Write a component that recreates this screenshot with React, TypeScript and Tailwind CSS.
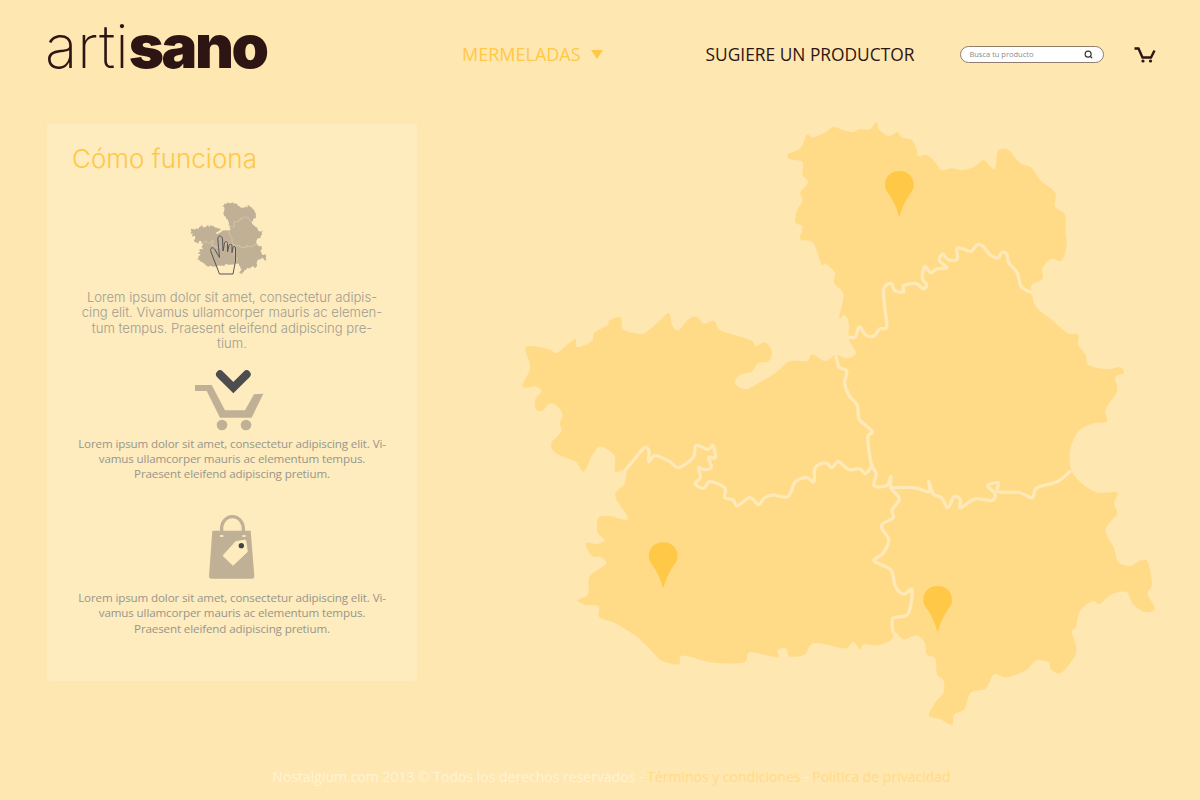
import { Search } from 'lucide-react';

// Map traced in a 1568x1568 space, squeezed to 660x630 on the page
const outline = [[660,110],[690,95],[705,62],[720,68],[745,58],[768,42],[790,50],[815,55],[830,48],[855,48],[870,30],[878,50],[900,65],[920,55],[930,68],[955,75],[965,95],[970,115],[990,112],[1010,130],[1025,150],[1050,145],[1075,150],[1105,140],[1125,125],[1150,148],[1155,130],[1160,100],[1185,100],[1210,130],[1240,145],[1260,175],[1295,205],[1295,240],[1318,260],[1320,300],[1322,340],[1310,375],[1285,370],[1265,395],[1265,420],[1240,435],[1240,455],[1250,490],[1285,520],[1325,555],[1350,558],[1350,585],[1368,610],[1375,635],[1420,645],[1450,640],[1458,655],[1438,665],[1442,700],[1415,745],[1418,775],[1385,780],[1350,800],[1330,850],[1335,900],[1360,930],[1395,952],[1442,952],[1435,980],[1442,1005],[1415,1045],[1435,1090],[1445,1125],[1475,1135],[1495,1122],[1515,1125],[1525,1180],[1515,1205],[1532,1240],[1510,1250],[1480,1230],[1465,1200],[1430,1205],[1400,1230],[1385,1222],[1355,1245],[1345,1285],[1335,1300],[1345,1350],[1310,1400],[1285,1392],[1280,1375],[1250,1370],[1225,1395],[1180,1412],[1150,1405],[1130,1440],[1095,1450],[1080,1490],[1055,1505],[1050,1530],[1020,1515],[995,1508],[1010,1475],[1030,1450],[1030,1420],[1015,1405],[1010,1365],[990,1355],[985,1325],[965,1308],[935,1318],[915,1300],[905,1320],[875,1332],[840,1330],[832,1342],[815,1325],[795,1340],[740,1328],[715,1330],[700,1355],[665,1360],[655,1340],[635,1345],[635,1362],[570,1350],[555,1375],[480,1375],[410,1358],[400,1380],[360,1370],[340,1350],[300,1310],[270,1290],[245,1275],[212,1262],[210,1235],[180,1232],[160,1220],[185,1205],[190,1160],[228,1130],[215,1112],[195,1110],[180,1078],[205,1080],[225,1070],[208,1050],[210,1015],[235,1010],[280,1018],[250,960],[272,930],[275,895],[250,900],[248,860],[215,838],[195,860],[175,900],[155,875],[110,855],[98,830],[122,800],[118,780],[125,760],[115,740],[95,730],[78,748],[62,745],[60,720],[75,700],[60,688],[30,688],[48,640],[38,590],[90,595],[110,605],[135,585],[155,570],[160,590],[195,575],[200,555],[232,535],[235,525],[262,515],[268,545],[295,555],[320,555],[360,520],[378,505],[385,535],[400,548],[425,520],[445,515],[460,532],[485,525],[500,548],[550,565],[575,575],[585,588],[605,578],[622,600],[615,625],[590,630],[575,650],[545,660],[535,680],[560,695],[590,680],[630,655],[665,625],[705,625],[718,608],[748,625],[775,610],[800,618],[822,605],[805,570],[805,530],[795,510],[782,518],[792,460],[770,430],[772,405],[750,382],[740,385],[720,330],[690,322],[695,290],[678,280],[682,250],[695,225],[690,205],[708,180],[695,160],[695,130],[665,122]];

const borders = [
  [[1240,455],[1215,440],[1205,405],[1185,380],[1180,358],[1168,355],[1160,368],[1140,360],[1125,340],[1110,335],[1095,352],[1075,345],[1062,345],[1062,372],[1040,372],[1028,358],[1020,375],[1038,392],[1015,395],[1000,405],[985,390],[980,420],[990,435],[982,445],[965,432],[935,437],[935,452],[915,450],[905,432],[888,445],[890,490],[895,540],[878,545],[865,562],[845,560],[830,540],[820,565],[805,565]],
  [[775,615],[782,640],[800,650],[795,680],[805,710],[825,735],[830,770],[860,800],[850,815],[858,880],[870,905],[865,935],[895,935],[905,912],[905,940],[925,968],[908,995],[910,1015],[885,1030],[885,1045],[900,1070],[885,1105],[865,1122],[905,1145],[915,1185],[935,1205],[955,1195],[945,1255],[910,1265],[910,1300]],
  [[275,895],[295,870],[320,840],[330,850],[330,875],[345,860],[380,875],[400,890],[435,865],[442,835],[470,845],[482,835],[488,865],[472,865],[478,890],[460,895],[448,890],[452,915],[440,930],[460,942],[475,925],[510,940],[510,965],[530,970],[540,985],[570,965],[590,982],[605,965],[625,958],[660,962],[678,925],[705,915],[722,925],[725,890],[750,878],[765,890],[780,875],[805,895],[830,893],[845,905],[860,885]],
  [[905,940],[960,940],[995,950],[995,925],[1005,955],[1025,965],[1040,990],[1055,962],[1070,970],[1070,990],[1105,968],[1145,972],[1152,955],[1135,935],[1160,928],[1160,950],[1210,952],[1240,965],[1252,940],[1300,925],[1330,900]],
];

const pins = [[925,152],[364,1076],[1016,1185]];

// runs a curve through every traced point (catmull-rom as cubic beziers)
const smooth = (pts: number[][], closed = false) => {
  const n = pts.length;
  const at = (i: number) => (closed ? pts[(i + n) % n] : pts[Math.max(0, Math.min(n - 1, i))]);
  let d = `M${pts[0][0]} ${pts[0][1]}`;
  for (let i = 0; i < (closed ? n : n - 1); i++) {
    const [p0, p1, p2, p3] = [at(i - 1), at(i), at(i + 1), at(i + 2)];
    const c1 = [p1[0] + (p2[0] - p0[0]) / 6, p1[1] + (p2[1] - p0[1]) / 6];
    const c2 = [p2[0] - (p3[0] - p1[0]) / 6, p2[1] - (p3[1] - p1[1]) / 6];
    d += ` C${c1[0]} ${c1[1]} ${c2[0]} ${c2[1]} ${p2[0]} ${p2[1]}`;
  }
  return closed ? d + 'Z' : d;
};

const outlinePath = smooth(outline, true);
const borderPaths = borders.map((b) => smooth(b));

const CartIcon = () => (
  <svg width="22" height="16" viewBox="0 0 22 16" fill="none">
    <path d="M0.5 1.5H4.5L8.5 10.5H17L20.5 3.5" stroke="#2d1514" strokeWidth="2.4" />
    <circle cx="9" cy="14" r="1.6" fill="#2d1514" />
    <circle cx="16.5" cy="14" r="1.6" fill="#2d1514" />
  </svg>
);

const HandMapIcon = () => (
  <svg width="120" height="95" viewBox="2.5 0 120 95" className="block">
    <g transform="translate(19.5 11.6) scale(0.0506 0.048)">
      <path d={outlinePath} fill="#c0b196" />
      {borderPaths.map((d, i) => (
        <path key={i} d={d} fill="none" stroke="#d9cba9" strokeWidth="0.7" vectorEffect="non-scaling-stroke" />
      ))}
    </g>
    <path
      d="M50 85L41.5 63C40 59 43 57.5 45 60L50 68.5L48.3 50C48.3 46 52.5 46 53 50L53.5 62L55 54C55.5 52 58 52 58 54.5V63L59.5 56.5C60 54.5 62.5 54.5 62.5 57V63.5L63.5 58.5C64 57 66 57 66 59V72L63.5 85Z"
      fill="none"
      stroke="#55555a"
      strokeWidth="1"
      strokeLinejoin="round"
    />
  </svg>
);

const BasketIcon = () => (
  <svg width="100" height="70" viewBox="6 0 300 210" className="block">
    <path d="M45 60H95L135 136H195L222 88L250 86L215 158H120L80 78H45Z" fill="#c0b196" />
    <circle cx="126" cy="180" r="16" fill="#c0b196" />
    <circle cx="198" cy="180" r="16" fill="#c0b196" />
    <path d="M120 28L160 68L200 28" fill="none" stroke="#4d4d4f" strokeWidth="24" strokeLinecap="round" />
  </svg>
);

const BagIcon = () => (
  <svg width="80" height="75" viewBox="4 0 240 225" className="block">
    <path d="M93 64C88 5 162 5 158 64" fill="none" stroke="#c0b196" strokeWidth="10" />
    <path d="M65 62H180L191 198Q191 206 184 206H62Q55 206 55 198Z" fill="#c0b196" />
    <ellipse cx="93" cy="78" rx="6" ry="3" fill="#feebbe" />
    <ellipse cx="160" cy="78" rx="6" ry="3" fill="#feebbe" />
    <path d="M97 137L135 95L165 90L170 125L127 166Z" fill="#feebbe" stroke="#feebbe" strokeWidth="3" strokeLinejoin="round" />
    <circle cx="152" cy="107" r="8" fill="#444448" />
  </svg>
);

const bodyText = 'text-center font-["Open_Sans",sans-serif] text-[11.6px] leading-[15.4px] tracking-[-0.13px] text-[#98968c]';

export default function App() {
  return (
    <div className="h-[800px] w-[1200px] overflow-hidden bg-[#ffe7b1] flex flex-col">
      {/* Header */}
      <header className="h-[110px] shrink-0 flex items-start">
        <div className='ml-[45px] mt-[9px] w-[400px] font-["Inter",sans-serif] text-[60px] leading-[74px] text-[#2d1514]'>
          <span className="font-extralight tracking-[0.1px]">arti</span>
          <span className="font-black tracking-[-2.4px]">sano</span>
        </div>
        <nav className='mt-[43px] ml-[17px] flex items-center font-["Open_Sans",sans-serif] text-[18px] leading-[22px]'>
          <span className="text-[#ffc846]">MERMELADAS</span>
          <span className="ml-[10px] h-0 w-0 border-x-[6px] border-t-[9px] border-x-transparent border-t-[#ffc846]" />
          <span className="ml-[103px] text-[17.35px] text-[#2d1514]">SUGIERE UN PRODUCTOR</span>
          <div className="ml-[46px] flex h-[17px] w-[144px] items-center rounded-full border border-[#8f7d6e] bg-white pl-[8px] pr-[10px]">
            <input
              placeholder="Busca tu producto"
              className="w-full min-w-0 bg-transparent text-[7.5px] leading-[10px] outline-none placeholder:text-[#8a8a8a]"
            />
            <Search size={9} strokeWidth={3} className="shrink-0 text-[#3a3035]" />
          </div>
          <span className="ml-[30px] mt-[2px]">
            <CartIcon />
          </span>
        </nav>
      </header>

      <main className="flex flex-1 items-start">
        {/* Como funciona */}
        <section className="ml-[47px] mt-[14px] flex h-[557px] w-[370px] flex-col items-center rounded-[2px] bg-[#feebbe]">
          <h2 className='mt-[18px] self-start pl-[25px] font-["Inter",sans-serif] font-light text-[26px] leading-[34px] text-[#ffc846]'>
            Cómo funciona
          </h2>
          <div className="mt-[13px]">
            <HandMapIcon />
          </div>
          <p className='mt-[6px] text-center font-["Inter",sans-serif] font-light text-[13.1px] leading-[15.4px] text-[#9f9d92]'>
            Lorem ipsum dolor sit amet, consectetur adipis-<br />
            cing elit. Vivamus ullamcorper mauris ac elemen-<br />
            tum tempus. Praesent eleifend adipiscing pre-<br />
            tium.
          </p>
          <div className="mt-[13px]">
            <BasketIcon />
          </div>
          <p className={`mt-[1px] ${bodyText}`}>
            Lorem ipsum dolor sit amet, consectetur adipiscing elit. Vi-<br />
            vamus ullamcorper mauris ac elementum tempus.<br />
            Praesent eleifend adipiscing pretium.
          </p>
          <div className="mt-[28px]">
            <BagIcon />
          </div>
          <p className={`mt-[5px] ${bodyText}`}>
            Lorem ipsum dolor sit amet, consectetur adipiscing elit. Vi-<br />
            vamus ullamcorper mauris ac elementum tempus.<br />
            Praesent eleifend adipiscing pretium.
          </p>
        </section>

        {/* Mapa */}
        <svg width="660" height="630" viewBox="0 0 1568 1568" preserveAspectRatio="none" className="ml-[93px] shrink-0">
          <path d={outlinePath} fill="#ffdb87" />
          {borderPaths.map((d, i) => (
            <path key={i} d={d} fill="none" stroke="#ffe9b8" strokeWidth="8" strokeLinejoin="round" strokeLinecap="round" />
          ))}
          {pins.map(([x, y]) => (
            <path
              key={x}
              transform={`translate(${x} ${y})`}
              d="M0 0C-22 0 -34 16 -34 34C-34 48 -28 52 -22 62C-12 78 -4 98 -2 110Q0 115 2 110C4 98 12 78 22 62C28 52 34 48 34 34C34 16 22 0 0 0Z"
              fill="#ffc846"
            />
          ))}
        </svg>
      </main>

      <footer className='h-[60px] shrink-0 pl-[23px] pt-[27px] text-center font-["Open_Sans",sans-serif] text-[14px] leading-[20px] text-[#fff3d6]'>
        Nostalgium.com 2013 © Todos los derechos reservados - <span className="text-[#ffdb87]">Términos y condiciones</span> - <span className="text-[#ffdb87]">Política de privacidad</span>
      </footer>
    </div>
  );
}
